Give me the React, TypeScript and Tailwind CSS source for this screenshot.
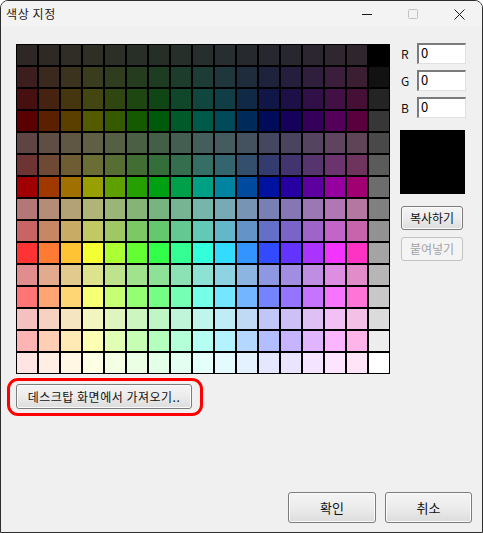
import React from 'react';

// saturation / lightness for each palette row
const ROWS: [number, number][] = [
    [0.11, 0.167],
    [0.33, 0.176],
    [0.63, 0.169],
    [1, 0.176],
    [0.17, 0.32],
    [0.36, 0.318],
    [1, 0.314],
    [0.29, 0.588],
    [0.48, 0.588],
    [1, 0.6],
    [0.59, 0.72],
    [1, 0.727],
    [0.73, 0.857],
    [1, 0.853],
    [1, 0.947],
];

const HUES = 16;

function cellColor(row: number, col: number) {
    if (col === HUES) {
        const v = Math.round((row * 255) / 14);
        return `rgb(${v}, ${v}, ${v})`;
    }
    const [s, l] = ROWS[row];
    const h = (col * 360) / 17;
    return `hsl(${h} ${s * 100}% ${l * 100}%)`;
}

const font = { fontFamily: '"Noto Sans CJK KR", "Noto Sans", sans-serif' };

function WinButton({
    children,
    className = '',
    disabled = false,
}: {
    children: React.ReactNode;
    className?: string;
    disabled?: boolean;
}) {
    return (
        <button
            type="button"
            disabled={disabled}
            className={
                'flex items-center justify-center rounded-[3px] border leading-none ' +
                (disabled
                    ? 'border-[#c2c2c2] bg-[#f4f4f4] text-[#a3a3a3] '
                    : 'border-[#7c7c7c] bg-linear-to-b from-[#f4f4f4] via-[#ececec] to-[#dcdcdc] text-[#111] shadow-[inset_0_0_0_1px_#fbfbfb] ') +
                className
            }
        >
            {children}
        </button>
    );
}

function ChannelRow({ label }: { label: string }) {
    return (
        <div className="flex items-center h-[21px]">
            <span className="w-[17px] pl-[1px] text-[12px] text-[#111]">{label}</span>
            <div className="w-[49px] h-[21px] bg-white border-t-2 border-l-2 border-r border-b border-t-[#7b7b7b] border-l-[#7b7b7b] border-r-[#e1e1e1] border-b-[#e1e1e1] pl-[2px] text-[13px] leading-[15px] text-black">
                0
            </div>
        </div>
    );
}

export default function App() {
    const rows = ROWS.map((_, r) => r);
    const cols = Array.from({ length: HUES + 1 }, (_, c) => c);

    return (
        <div
            style={font}
            className="w-[483px] h-[533px] flex flex-col bg-[#f0f0f0] border border-[#2e2e2e] rounded-t-[8px] overflow-hidden"
        >
            {/* title bar */}
            <div className="h-[26px] flex items-center bg-[#f3f3f3]">
                <span className="pl-[5px] text-[12px] tracking-[0.6px] text-[#1a1a1a]">색상 지정</span>
                <div className="ml-auto flex h-full">
                    <div className="w-[46px] flex items-center justify-center">
                        <svg width="10" height="10" viewBox="0 0 10 10">
                            <line x1="0" y1="5.5" x2="10" y2="5.5" stroke="#1a1a1a" strokeWidth="1" />
                        </svg>
                    </div>
                    <div className="w-[46px] flex items-center justify-center">
                        <svg width="10" height="10" viewBox="0 0 10 10">
                            <rect x="0.5" y="0.5" width="9" height="9" rx="1" fill="none" stroke="#c2c2c2" strokeWidth="1" />
                        </svg>
                    </div>
                    <div className="w-[46px] flex items-center justify-center">
                        <svg width="11" height="11" viewBox="0 0 11 11">
                            <path d="M0.5 0.5 L10.5 10.5 M10.5 0.5 L0.5 10.5" stroke="#1a1a1a" strokeWidth="1" />
                        </svg>
                    </div>
                </div>
            </div>

            {/* body */}
            <div className="flex pt-[16px] pl-[15px]">
                <div className="flex flex-col">
                    <div className="mt-[1px] p-px bg-black grid grid-cols-[repeat(17,20px)] gap-[2px]">
                        {rows.map((r) =>
                            cols.map((c) => (
                                <div
                                    key={r + '-' + c}
                                    className="w-[20px] h-[20px]"
                                    style={{ backgroundColor: cellColor(r, c) }}
                                />
                            ))
                        )}
                    </div>

                    <div className="relative mt-[10px] w-[176px]">
                        <WinButton className="w-[176px] h-[25px] text-[12px] tracking-[0.5px]">
                            데스크탑 화면에서 가져오기..
                        </WinButton>
                        <div className="absolute -left-[9px] -top-[6px] -right-[11px] -bottom-[7px] border-[3px] border-[#ff0000] rounded-[11px] pointer-events-none" />
                    </div>
                </div>

                <div className="ml-[10px] flex flex-col">
                    <div className="flex flex-col gap-[6px]">
                        <ChannelRow label="R" />
                        <ChannelRow label="G" />
                        <ChannelRow label="B" />
                    </div>
                    <div className="mt-[12px] w-[65px] h-[64px] bg-black" />
                    <WinButton className="mt-[12px] ml-[1px] w-[62px] h-[24px] text-[12px]">복사하기</WinButton>
                    <WinButton disabled className="mt-[7px] ml-[1px] w-[62px] h-[24px] text-[12px]">
                        붙여넣기
                    </WinButton>
                </div>
            </div>

            {/* footer */}
            <div className="mt-auto flex justify-end gap-[9px] pr-[10px] pb-[9px]">
                <WinButton className="w-[88px] h-[31px] text-[13px]">확인</WinButton>
                <WinButton className="w-[87px] h-[31px] text-[13px]">취소</WinButton>
            </div>
        </div>
    );
}
